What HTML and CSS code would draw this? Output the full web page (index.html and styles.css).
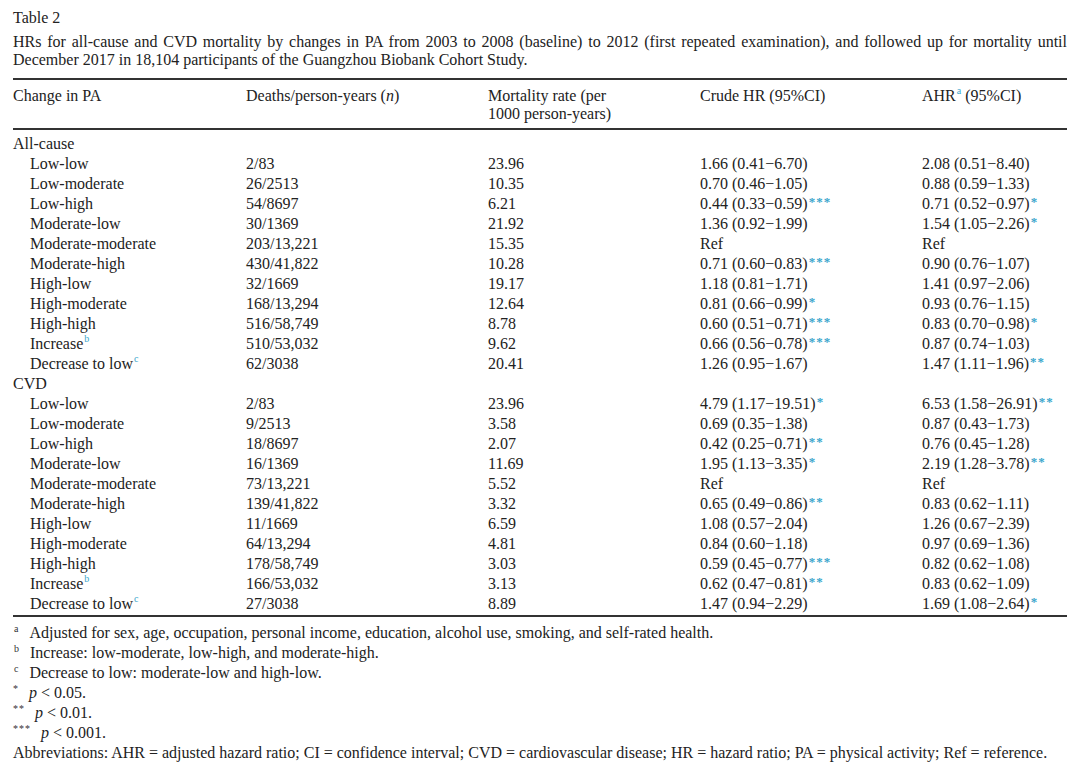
FILE: index.html
```html
<!DOCTYPE html>
<html>
<head>
<meta charset="utf-8">
<link rel="stylesheet" href="styles.css">
</head>
<body>
<div class="page">
  <div class="label">Table 2</div>
  <p class="caption">HRs for all-cause and CVD mortality by changes in PA from 2003 to 2008 (baseline) to 2012 (first repeated examination), and followed up for mortality until December 2017 in 18,104 participants of the Guangzhou Biobank Cohort Study.</p>
  <table class="tbl">
    <colgroup>
      <col class="c1"><col class="c2"><col class="c3"><col class="c4"><col class="c5">
    </colgroup>
    <thead>
      <tr>
        <th>Change in PA</th>
        <th>Deaths/person-years (<i>n</i>)</th>
        <th>Mortality rate (per<br>1000 person-years)</th>
        <th>Crude HR (95%CI)</th>
        <th>AHR<sup class="fn">a</sup> (95%CI)</th>
      </tr>
    </thead>
    <tbody>
      <tr class="grp first"><td colspan="5">All-cause</td></tr>
      <tr><td class="ind">Low-low</td><td>2/83</td><td>23.96</td><td>1.66 (0.41−6.70)</td><td>2.08 (0.51−8.40)</td></tr>
      <tr><td class="ind">Low-moderate</td><td>26/2513</td><td>10.35</td><td>0.70 (0.46−1.05)</td><td>0.88 (0.59−1.33)</td></tr>
      <tr><td class="ind">Low-high</td><td>54/8697</td><td>6.21</td><td>0.44 (0.33−0.59)<span class="st">***</span></td><td>0.71 (0.52−0.97)<span class="st">*</span></td></tr>
      <tr><td class="ind">Moderate-low</td><td>30/1369</td><td>21.92</td><td>1.36 (0.92−1.99)</td><td>1.54 (1.05−2.26)<span class="st">*</span></td></tr>
      <tr><td class="ind">Moderate-moderate</td><td>203/13,221</td><td>15.35</td><td>Ref</td><td>Ref</td></tr>
      <tr><td class="ind">Moderate-high</td><td>430/41,822</td><td>10.28</td><td>0.71 (0.60−0.83)<span class="st">***</span></td><td>0.90 (0.76−1.07)</td></tr>
      <tr><td class="ind">High-low</td><td>32/1669</td><td>19.17</td><td>1.18 (0.81−1.71)</td><td>1.41 (0.97−2.06)</td></tr>
      <tr><td class="ind">High-moderate</td><td>168/13,294</td><td>12.64</td><td>0.81 (0.66−0.99)<span class="st">*</span></td><td>0.93 (0.76−1.15)</td></tr>
      <tr><td class="ind">High-high</td><td>516/58,749</td><td>8.78</td><td>0.60 (0.51−0.71)<span class="st">***</span></td><td>0.83 (0.70−0.98)<span class="st">*</span></td></tr>
      <tr><td class="ind">Increase<sup class="fn">b</sup></td><td>510/53,032</td><td>9.62</td><td>0.66 (0.56−0.78)<span class="st">***</span></td><td>0.87 (0.74−1.03)</td></tr>
      <tr><td class="ind">Decrease to low<sup class="fn">c</sup></td><td>62/3038</td><td>20.41</td><td>1.26 (0.95−1.67)</td><td>1.47 (1.11−1.96)<span class="st">**</span></td></tr>
      <tr class="grp"><td colspan="5">CVD</td></tr>
      <tr><td class="ind">Low-low</td><td>2/83</td><td>23.96</td><td>4.79 (1.17−19.51)<span class="st">*</span></td><td>6.53 (1.58−26.91)<span class="st">**</span></td></tr>
      <tr><td class="ind">Low-moderate</td><td>9/2513</td><td>3.58</td><td>0.69 (0.35−1.38)</td><td>0.87 (0.43−1.73)</td></tr>
      <tr><td class="ind">Low-high</td><td>18/8697</td><td>2.07</td><td>0.42 (0.25−0.71)<span class="st">**</span></td><td>0.76 (0.45−1.28)</td></tr>
      <tr><td class="ind">Moderate-low</td><td>16/1369</td><td>11.69</td><td>1.95 (1.13−3.35)<span class="st">*</span></td><td>2.19 (1.28−3.78)<span class="st">**</span></td></tr>
      <tr><td class="ind">Moderate-moderate</td><td>73/13,221</td><td>5.52</td><td>Ref</td><td>Ref</td></tr>
      <tr><td class="ind">Moderate-high</td><td>139/41,822</td><td>3.32</td><td>0.65 (0.49−0.86)<span class="st">**</span></td><td>0.83 (0.62−1.11)</td></tr>
      <tr><td class="ind">High-low</td><td>11/1669</td><td>6.59</td><td>1.08 (0.57−2.04)</td><td>1.26 (0.67−2.39)</td></tr>
      <tr><td class="ind">High-moderate</td><td>64/13,294</td><td>4.81</td><td>0.84 (0.60−1.18)</td><td>0.97 (0.69−1.36)</td></tr>
      <tr><td class="ind">High-high</td><td>178/58,749</td><td>3.03</td><td>0.59 (0.45−0.77)<span class="st">***</span></td><td>0.82 (0.62−1.08)</td></tr>
      <tr><td class="ind">Increase<sup class="fn">b</sup></td><td>166/53,032</td><td>3.13</td><td>0.62 (0.47−0.81)<span class="st">**</span></td><td>0.83 (0.62−1.09)</td></tr>
      <tr class="last"><td class="ind">Decrease to low<sup class="fn">c</sup></td><td>27/3038</td><td>8.89</td><td>1.47 (0.94−2.29)</td><td>1.69 (1.08−2.64)<span class="st">*</span></td></tr>
    </tbody>
  </table>
  <div class="notes">
    <div class="note"><sup class="mk">a</sup><span class="nt">Adjusted for sex, age, occupation, personal income, education, alcohol use, smoking, and self-rated health.</span></div>
    <div class="note"><sup class="mk">b</sup><span class="nt">Increase: low-moderate, low-high, and moderate-high.</span></div>
    <div class="note"><sup class="mk">c</sup><span class="nt">Decrease to low: moderate-low and high-low.</span></div>
    <div class="note"><sup class="mk star">*</sup><span class="nt"><i>p</i> &lt; 0.05.</span></div>
    <div class="note"><sup class="mk star">**</sup><span class="nt"><i>p</i> &lt; 0.01.</span></div>
    <div class="note"><sup class="mk star">***</sup><span class="nt"><i>p</i> &lt; 0.001.</span></div>
    <div class="note abbr">Abbreviations: AHR = adjusted hazard ratio; CI = confidence interval; CVD = cardiovascular disease; HR = hazard ratio; PA = physical activity; Ref = reference.</div>
  </div>
</div>
</body>
</html>
```
FILE: styles.css
```css
html, body {
  margin: 0;
  padding: 0;
  background: #ffffff;
}
.page {
  font-family: "Liberation Serif", "Times New Roman", serif;
  font-size: 16px;
  color: #222222;
  padding: 9px 13px 0 13px;
}
.label {
  line-height: 18px;
}
.caption {
  margin: 6px 0 0 0;
  line-height: 18px;
  text-align: justify;
}
.tbl {
  width: 100%;
  margin-top: 9px;
  border-collapse: collapse;
  table-layout: fixed;
  border-top: 2px solid #333333;
  border-bottom: 2px solid #333333;
}
.c1 { width: 233px; }
.c2 { width: 242px; }
.c3 { width: 212px; }
.c4 { width: 222px; }
.c5 { width: auto; }
.tbl th {
  font-weight: normal;
  text-align: left;
  vertical-align: top;
  line-height: 18px;
  padding: 7px 0 5px 0;
  border-bottom: 2px solid #333333;
}
.tbl td {
  padding: 0;
  height: 20px;
  line-height: 20px;
  white-space: nowrap;
}
.tbl tr.first td {
  padding-top: 4px;
}
.tbl tr.last td {
  padding-bottom: 1px;
}
.tbl td.ind {
  padding-left: 17px;
}
.fn {
  color: #3aa6cc;
  font-size: 10px;
  line-height: 0;
  vertical-align: 7px;
  margin-left: 1px;
}
.st {
  color: #3aa6cc;
  font-size: 13px;
  font-weight: bold;
  letter-spacing: 1px;
  vertical-align: 3px;
  line-height: 0;
  margin-left: 1px;
}
.notes {
  padding-top: 6px;
}
.note {
  line-height: 20px;
  white-space: nowrap;
}
.mk {
  font-size: 10px;
  line-height: 0;
  vertical-align: 6px;
  color: #333333;
  margin-left: 1px;
  margin-right: 11px;
}
.mk.star {
  letter-spacing: 1px;
  margin-left: 0;
  margin-right: 10px;
}
.abbr {
  line-height: 20px;
}
```
